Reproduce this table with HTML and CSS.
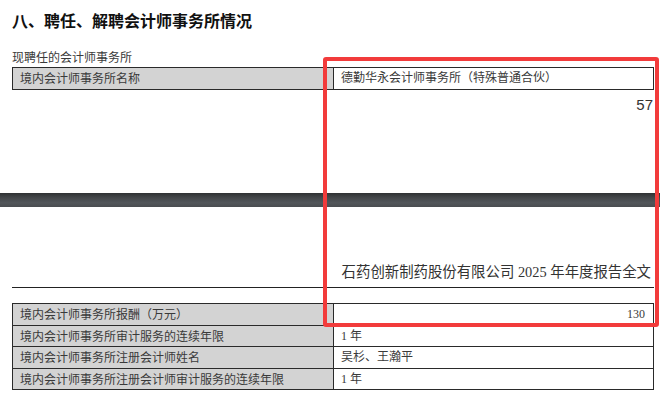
FILE: index.html
```html
<!DOCTYPE html>
<html lang="zh-CN">
<head>
<meta charset="utf-8">
<title>聘任、解聘会计师事务所情况</title>
<link rel="stylesheet" href="styles.css">
</head>
<body>
<div class="page page-one">
  <h1 class="title">八、聘任、解聘会计师事务所情况</h1>
  <div class="caption">现聘任的会计师事务所</div>
  <table class="grid">
    <tr>
      <td class="label">境内会计师事务所名称</td>
      <td class="value">德勤华永会计师事务所（特殊普通合伙）</td>
    </tr>
  </table>
  <div class="page-number">57</div>
</div>
<div class="page-gap"></div>
<div class="page page-two">
  <div class="running-head">石药创新制药股份有限公司 2025 年年度报告全文</div>
  <table class="grid">
    <tr>
      <td class="label">境内会计师事务所报酬（万元）</td>
      <td class="value num">130</td>
    </tr>
    <tr>
      <td class="label">境内会计师事务所审计服务的连续年限</td>
      <td class="value">1 年</td>
    </tr>
    <tr>
      <td class="label">境内会计师事务所注册会计师姓名</td>
      <td class="value">吴杉、王瀚平</td>
    </tr>
    <tr>
      <td class="label">境内会计师事务所注册会计师审计服务的连续年限</td>
      <td class="value">1 年</td>
    </tr>
  </table>
</div>
<div class="highlight"></div>
</body>
</html>
```
FILE: styles.css
```css
html, body {
  margin: 0;
  padding: 0;
  background: #ffffff;
}
body {
  width: 660px;
  height: 396px;
  overflow: hidden;
  position: relative;
  font-family: "Liberation Serif", "Noto Sans CJK SC", serif;
  color: #333333;
}
.page {
  display: flex;
  flex-direction: column;
  padding: 0 6px 0 12px;
}
.page-one {
  height: 193px;
  box-sizing: border-box;
  padding-top: 10px;
}
.title {
  margin: 0;
  font-family: "Noto Sans CJK SC", sans-serif;
  font-weight: 700;
  font-size: 16px;
  line-height: 20px;
  color: #111111;
}
.caption {
  margin-top: 19px;
  font-family: "Noto Sans CJK SC", sans-serif;
  font-size: 12px;
  line-height: 16px;
  color: #3a3a3a;
}
.grid {
  border-collapse: collapse;
  width: 642px;
  table-layout: fixed;
  margin-top: 2px;
}
.grid td {
  border: 1px solid #2a2a2a;
  height: 20.5px;
  padding: 0 7px;
  font-size: 12px;
  line-height: 16px;
  vertical-align: middle;
  white-space: nowrap;
}
.grid .label {
  box-sizing: border-box;
  width: 321px;
  background: #d3d3d3;
  font-family: "Noto Sans CJK SC", sans-serif;
  color: #3a3a3a;
}
.grid .value {
  font-family: "Liberation Serif", "Noto Sans CJK SC", serif;
  color: #3a3a3a;
}
.grid .num {
  text-align: right;
  padding-right: 8px;
}
.page-number {
  margin-top: 6px;
  text-align: right;
  padding-right: 1px;
  font-family: "Liberation Sans", sans-serif;
  font-size: 15px;
  line-height: 18px;
  color: #333333;
}
.page-gap {
  height: 14px;
  background: linear-gradient(to bottom, #2f3133 0%, #45484b 35%, #52565a 70%, #4a4d50 100%);
}
.page-two {
  padding-top: 56px;
}
.running-head {
  box-sizing: border-box;
  width: 642px;
  text-align: right;
  font-family: "Liberation Serif", "Noto Sans CJK SC", serif;
  font-size: 14.4px;
  line-height: 18px;
  color: #333333;
  padding: 0 3px 6px 0;
  border-bottom: 1px solid #222222;
  white-space: nowrap;
}
.page-two .grid {
  margin-top: 15px;
}
.highlight {
  position: absolute;
  left: 323px;
  top: 57px;
  width: 328px;
  height: 262px;
  border: 4px solid #f23b3b;
  border-radius: 3px;
}
```
